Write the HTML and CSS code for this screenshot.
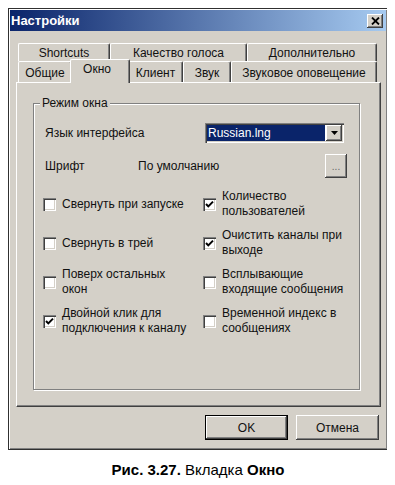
FILE: index.html
```
<!DOCTYPE html>
<html lang="ru">
<head>
<meta charset="utf-8">
<title>Настройки</title>
<link rel="stylesheet" href="styles.css">
</head>
<body>
<div class="window">
  <div class="titlebar">
    <span class="title">Настройки</span>
    <span class="close"><svg width="9" height="8" viewBox="0 0 9 8"><path d="M1 0.5 L8 7.5 M8 0.5 L1 7.5" stroke="#000" stroke-width="1.8" fill="none"/></svg></span>
  </div>
  <div class="content">
    <div class="tabs">
      <div class="tabrow row1">
        <div class="tab t-short">Shortcuts</div>
        <div class="tab t-quality">Качество голоса</div>
        <div class="tab t-extra">Дополнительно</div>
      </div>
      <div class="tabrow row2">
        <div class="tab t-general">Общие</div>
        <div class="tab t-window sel">Окно</div>
        <div class="tab t-client">Клиент</div>
        <div class="tab t-sound">Звук</div>
        <div class="tab t-notify">Звуковое оповещение</div>
      </div>
    </div>
    <div class="panel">
      <fieldset class="group">
        <legend>Режим окна</legend>
        <div class="row lang-row">
          <span class="label lang-label">Язык интерфейса</span>
          <div class="select">
            <span class="value">Russian.lng</span>
            <span class="arrow"><svg width="7" height="4" viewBox="0 0 7 4"><path d="M0 0 H7 L3.5 4 Z" fill="#000"/></svg></span>
          </div>
        </div>
        <div class="row font-row">
          <span class="label font-label">Шрифт</span>
          <span class="font-value">По умолчанию</span>
          <span class="dots">...</span>
        </div>
        <div class="checks">
          <label class="check"><span class="box"></span><span class="text">Свернуть при запуске</span></label>
          <label class="check"><span class="box on"><svg width="9" height="9" viewBox="0 0 9 9"><path d="M1 4 L3.3 6.4 L8 1.6" stroke="#000" stroke-width="2" fill="none"/></svg></span><span class="text">Количество<br>пользователей</span></label>
          <label class="check"><span class="box"></span><span class="text">Свернуть в трей</span></label>
          <label class="check"><span class="box on"><svg width="9" height="9" viewBox="0 0 9 9"><path d="M1 4 L3.3 6.4 L8 1.6" stroke="#000" stroke-width="2" fill="none"/></svg></span><span class="text">Очистить каналы при<br>выходе</span></label>
          <label class="check"><span class="box"></span><span class="text">Поверх остальных<br>окон</span></label>
          <label class="check"><span class="box"></span><span class="text">Всплывающие<br>входящие сообщения</span></label>
          <label class="check"><span class="box on"><svg width="9" height="9" viewBox="0 0 9 9"><path d="M1 4 L3.3 6.4 L8 1.6" stroke="#000" stroke-width="2" fill="none"/></svg></span><span class="text">Двойной клик для<br>подключения к каналу</span></label>
          <label class="check"><span class="box"></span><span class="text">Временной индекс в<br>сообщениях</span></label>
        </div>
      </fieldset>
    </div>
    <div class="buttons">
      <span class="btn default">OK</span>
      <span class="btn">Отмена</span>
    </div>
  </div>
</div>
<div class="caption"><b>Рис. 3.27.</b> Вкладка <b>Окно</b></div>
</body>
</html>
```

FILE: styles.css
```
* { box-sizing: border-box; }
body {
  margin: 8px;
  background: #fff;
  font-family: "Liberation Sans", Arial, sans-serif;
  font-size: 12px;
  color: #111;
}
.window {
  width: 380px;
  height: 442px;
  background: #d4d0c8;
  border: 1px solid #303030;
  padding: 1px;
  box-shadow: inset 1px 1px #fff, inset -1px -1px #808080;
  display: flex;
  flex-direction: column;
}
.titlebar {
  height: 21px;
  flex: none;
  background: linear-gradient(to right, #0a246a, #a6caf0);
  display: flex;
  align-items: center;
  justify-content: space-between;
  padding: 0 3px 0 1px;
}
.title {
  color: #fff;
  font-weight: bold;
  font-size: 13px;
}
.close {
  width: 16px;
  height: 14px;
  background: #d4d0c8;
  box-shadow: inset -1px -1px #404040, inset 1px 1px #fff, inset -2px -2px #808080;
  display: flex;
  align-items: center;
  justify-content: center;
}
.content {
  padding: 12px 5px 0 6px;
  display: flex;
  flex-direction: column;
}
.tabs { padding: 0 4px 0 2px; }
.tabrow { display: flex; }
.row1 { height: 18px; }
.row2 { height: 21px; }
.tab {
  flex: none;
  background: #d4d0c8;
  border-top: 1px solid #fff;
  border-left: 1px solid #fff;
  border-right: 1px solid #404040;
  box-shadow: inset -1px 0 #808080;
  border-radius: 2px 2px 0 0;
  display: flex;
  align-items: center;
  justify-content: center;
  white-space: nowrap;
  padding-top: 1px;
}
.t-short { width: 92px; }
.t-quality { width: 137px; }
.t-extra { width: 130px; }
.t-general { width: 54px; }
.t-window { width: 60px; }
.t-client { width: 55px; }
.t-sound { width: 48px; }
.t-notify { width: 146px; }
.tab.sel {
  margin: -2px -2px -1px;
  position: relative;
  z-index: 1;
  align-items: flex-start;
  padding-top: 2px;
  padding-right: 6px;
}
.panel {
  height: 325px;
  border-top: 1px solid #fff;
  border-left: 1px solid #fff;
  border-right: 1px solid #404040;
  border-bottom: 1px solid #404040;
  box-shadow: inset -1px -1px #808080;
  padding: 13px 20px 0 16px;
}
.group {
  margin: 0;
  height: 294px;
  border: 1px solid #808080;
  box-shadow: inset 1px 1px #fff, 1px 1px #fff;
  padding: 13px 13px 0 10px;
}
.group legend {
  margin-left: -4px;
  padding: 0 2px;
  background: #d4d0c8;
  line-height: 14px;
}
.row {
  display: flex;
  align-items: center;
  padding-left: 1px;
}
.lang-row { height: 20px; }
.lang-label { width: 160px; }
.select {
  width: 139px;
  height: 20px;
  background: #fff;
  box-shadow: inset 1px 1px #808080, inset 2px 2px #404040, inset -1px -1px #fff, inset -2px -2px #d4d0c8;
  padding: 2px;
  display: flex;
  gap: 1px;
}
.value {
  flex: 1;
  background: #0a246a;
  color: #fff;
  line-height: 16px;
  padding-left: 1px;
}
.arrow {
  width: 16px;
  background: #d4d0c8;
  box-shadow: inset -1px -1px #404040, inset 1px 1px #fff, inset -2px -2px #808080;
  display: flex;
  align-items: center;
  justify-content: center;
}
.font-row { height: 24px; margin-top: 11px; }
.font-label { width: 93px; }
.font-value { flex: 1; }
.dots {
  width: 22px;
  height: 24px;
  background: #d4d0c8;
  box-shadow: inset -1px -1px #404040, inset 1px 1px #fff, inset -2px -2px #808080;
  display: flex;
  align-items: center;
  justify-content: center;
  color: #666;
  font-size: 10px;
  margin-right: -1px;
}
.checks {
  margin-top: 11px;
  margin-left: -1px;
  display: grid;
  grid-template-columns: 160px 1fr;
  grid-auto-rows: 30px;
  row-gap: 9px;
}
.check {
  display: flex;
  align-items: center;
  gap: 6px;
}
.box {
  flex: none;
  width: 13px;
  height: 13px;
  background: #fff;
  box-shadow: inset 1px 1px #808080, inset 2px 2px #404040, inset -1px -1px #fff, inset -2px -2px #d4d0c8;
  display: flex;
  align-items: center;
  justify-content: center;
}
.text {
  line-height: 15px;
  white-space: nowrap;
}
.buttons {
  display: flex;
  justify-content: flex-end;
  gap: 8px;
  padding: 8px 2px 0 0;
}
.btn {
  width: 83px;
  height: 25px;
  background: #d4d0c8;
  box-shadow: inset -1px -1px #404040, inset 1px 1px #fff, inset -2px -2px #808080;
  display: flex;
  align-items: center;
  justify-content: center;
}
.btn.default {
  border: 1px solid #000;
}
.caption {
  width: 380px;
  margin-top: 12px;
  text-align: center;
  font-size: 15px;
  line-height: 16px;
  color: #000;
}
```
